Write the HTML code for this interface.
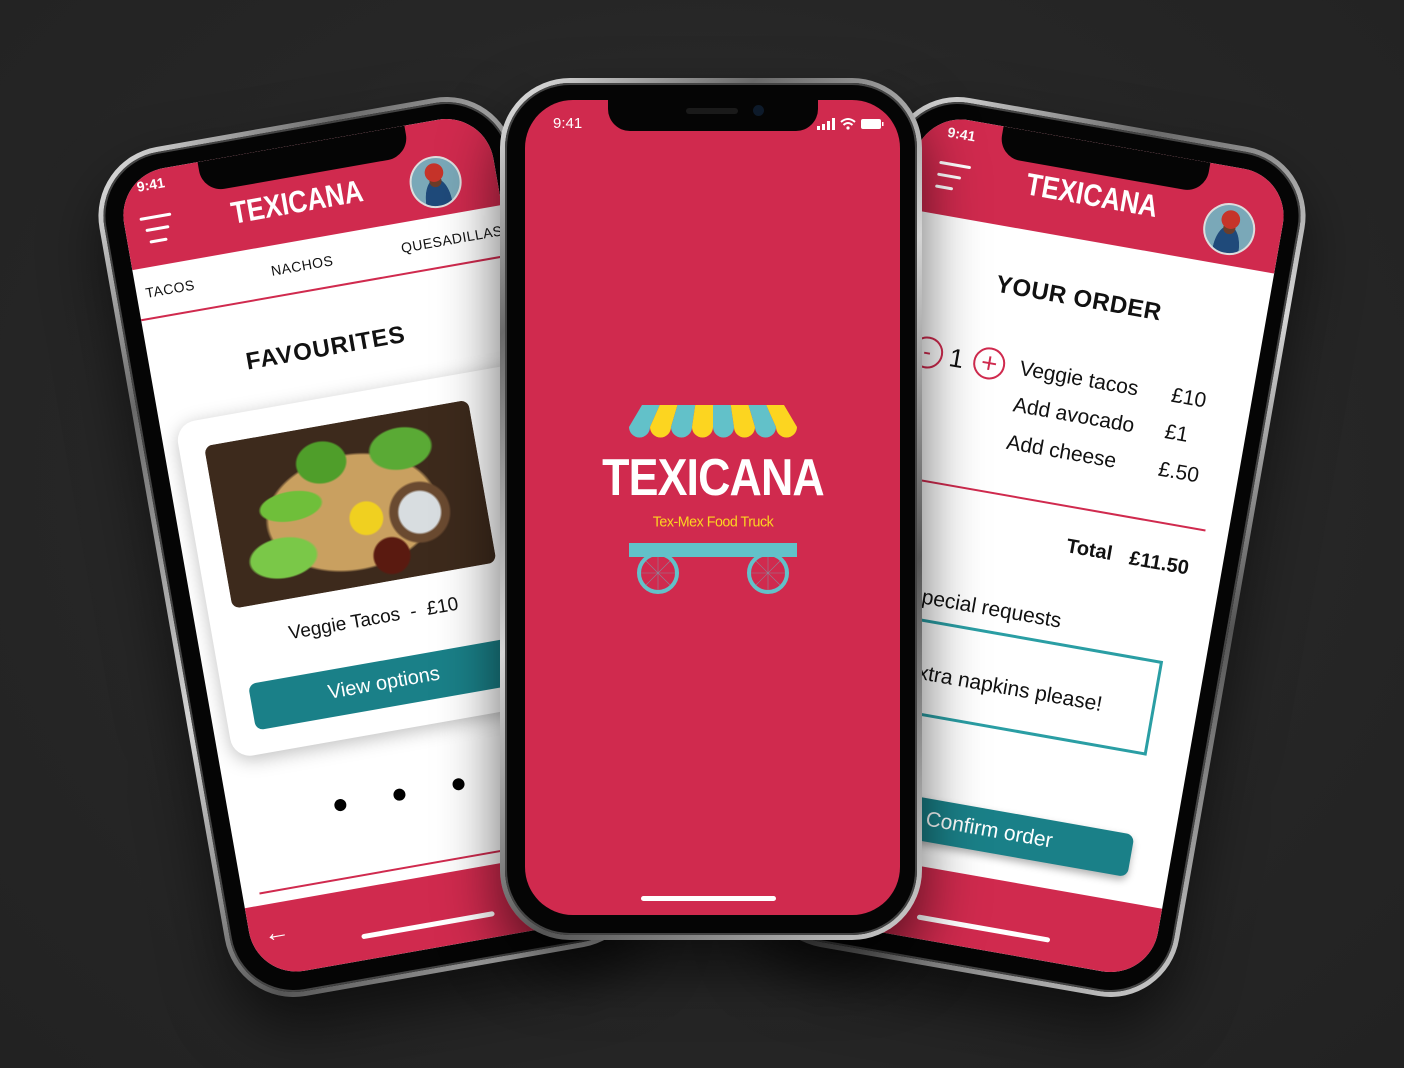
<!DOCTYPE html>
<html><head><meta charset="utf-8"><style>
*{margin:0;padding:0;box-sizing:border-box}
body{width:1404px;height:1068px;overflow:hidden;background:radial-gradient(ellipse at 50% 45%,#333 0%,#262626 60%,#222 100%);font-family:"Liberation Sans",sans-serif;position:relative}
.phone{position:absolute;width:422px;height:862px;border-radius:70px;background:linear-gradient(135deg,#e8e8e8,#6a6a6a 20%,#d5d5d5 45%,#555 70%,#cfcfcf);box-shadow:0 30px 60px rgba(0,0,0,.6)}
.bez{position:absolute;left:5px;top:5px;right:5px;bottom:5px;border-radius:65px;background:#050505;box-shadow:inset 0 0 0 2px #444}
.scr{position:absolute;left:25px;top:22px;width:375px;height:815px;border-radius:48px;overflow:hidden;background:#fff}
.notch{position:absolute;left:83px;top:0;width:210px;height:31px;background:#050505;border-radius:0 0 22px 22px;z-index:5}
.red{background:#d02a4e}
.a{position:absolute}
.c{position:absolute;transform:translate(-50%,-50%);white-space:nowrap}
.t{color:#fff;font-weight:700;font-size:31px;letter-spacing:0;transform:translate(-50%,-50%) scaleX(.84)}
.time{color:#fff;font-size:14px;font-weight:700}
.ham i{position:absolute;height:3px;background:#fff;border-radius:2px;left:0}
.av{position:absolute;width:52px;height:52px;border-radius:50%;border:2px solid #ddd;background:radial-gradient(circle at 50% 30%,#c6342a 0 22%,transparent 23%),radial-gradient(circle at 50% 48%,#6b3d2a 0 17%,transparent 18%),radial-gradient(ellipse at 50% 95%,#1f4a7a 0 38%,transparent 39%),#7aa8b8}
.tab{font-size:14px;color:#111;letter-spacing:.5px}
.teal{background:#1a8088}
.home{position:absolute;height:5px;width:135px;background:#fff;border-radius:3px}
.r{font-size:21px;color:#111}
</style></head><body>

<!-- LEFT PHONE -->
<div class="phone" style="left:159px;top:116px;transform:rotate(-10deg)">
<div class="bez"></div>
<div class="scr">
 <div class="notch"></div>
 <div class="a red" style="left:0;top:0;width:375px;height:95px"></div>
 <div class="c time" style="left:33px;top:14px">9:41</div>
 <div class="a ham" style="left:16px;top:45px;width:34px;height:26px"><i style="top:0;width:32px"></i><i style="top:12px;width:24px;left:4px"></i><i style="top:24px;width:18px;left:6px"></i></div>
 <div class="c t" style="left:174px;top:57px">TEXICANA</div>
 <div class="av" style="left:288px;top:35px"></div>
 <div class="c tab" style="left:34px;top:120px">TACOS</div>
 <div class="c tab" style="left:168px;top:120px">NACHOS</div>
 <div class="c tab" style="left:320px;top:120px">QUESADILLAS</div>
 <div class="a" style="left:0;top:145px;width:375px;height:2px;background:#d02a4e"></div>
 <div class="c" style="left:177px;top:206px;font-size:24px;font-weight:900;letter-spacing:1px;color:#111">FAVOURITES</div>
 <div class="a" style="left:15px;top:254px;width:400px;height:340px;background:#fff;border-radius:20px;box-shadow:0 4px 18px rgba(0,0,0,.25)"></div>
 <div class="a" style="left:40px;top:281px;width:268px;height:165px;border-radius:8px;background:radial-gradient(circle at 55% 60%,#f0d020 0 9%,transparent 10%),radial-gradient(circle at 75% 62%,#d8dde0 0 9%,#6a4a30 10% 13%,transparent 14%),radial-gradient(circle at 62% 85%,#5a1a10 0 8%,transparent 9%),radial-gradient(ellipse at 28% 45%,#6fbf3a 0 11%,transparent 12%),radial-gradient(ellipse at 42% 22%,#4f9e2a 0 11%,transparent 12%),radial-gradient(ellipse at 22% 75%,#7ac848 0 11%,transparent 12%),radial-gradient(ellipse at 72% 22%,#5aaa35 0 11%,transparent 12%),radial-gradient(ellipse at 50% 55%,#c9a060 0 44%,#3d2a1c 46%),#3d2a1c"></div>
 <div class="c" style="left:177px;top:481px;font-size:19px;color:#111">Veggie Tacos &nbsp;- &nbsp;£10</div>
 <div class="a teal" style="left:42px;top:523px;width:380px;height:47px;border-radius:8px"></div>
 <div class="c" style="left:176px;top:546px;font-size:20px;color:#fff">View options</div>
 <div class="a" style="left:106px;top:652px;width:12px;height:12px;border-radius:50%;background:#000"></div>
 <div class="a" style="left:166px;top:652px;width:12px;height:12px;border-radius:50%;background:#000"></div>
 <div class="a" style="left:226px;top:652px;width:12px;height:12px;border-radius:50%;background:#000"></div>
 <div class="a" style="left:17px;top:730px;width:360px;height:2px;background:#d02a4e"></div>
 <div class="a red" style="left:0;top:743px;width:375px;height:72px"></div>
 <div class="c" style="left:27px;top:772px;color:#fff;font-size:26px;font-weight:700">←</div>
 <div class="home" style="left:110px;top:789px"></div>
</div>
</div>

<!-- RIGHT PHONE -->
<div class="phone" style="left:823px;top:116px;transform:rotate(10deg)">
<div class="bez"></div>
<div class="scr">
 <div class="notch"></div>
 <div class="a red" style="left:0;top:0;width:375px;height:98px"></div>
 <div class="c time" style="left:43px;top:15px">9:41</div>
 <div class="a ham" style="left:26px;top:45px;width:34px;height:26px"><i style="top:0;width:32px"></i><i style="top:12px;width:24px"></i><i style="top:24px;width:18px"></i></div>
 <div class="c t" style="left:182px;top:53px">TEXICANA</div>
 <div class="av" style="left:297px;top:36px"></div>
 <div class="c" style="left:187px;top:157px;font-size:24px;font-weight:900;letter-spacing:.5px;color:#111">YOUR ORDER</div>
 <div class="c" style="left:47px;top:236px;width:32px;height:32px;border:2px solid #d02a4e;border-radius:50%;color:#d02a4e;font-size:24px;line-height:27px;text-align:center">-</div>
 <div class="c" style="left:77px;top:237px;font-size:26px;color:#111">1</div>
 <div class="c" style="left:110px;top:236px;width:32px;height:32px;border:2px solid #d02a4e;border-radius:50%;color:#d02a4e;font-size:28px;line-height:27px;text-align:center">+</div>
 <div class="a r" style="left:141px;top:224px">Veggie tacos</div>
 <div class="a r" style="left:295px;top:224px">£10</div>
 <div class="a r" style="left:141px;top:261px">Add avocado</div>
 <div class="a r" style="left:295px;top:261px">£1</div>
 <div class="a r" style="left:141px;top:299px">Add cheese</div>
 <div class="a r" style="left:295px;top:299px">£.50</div>
 <div class="a" style="left:0;top:362px;width:352px;height:2px;background:#d02a4e"></div>
 <div class="c" style="left:241px;top:403px;font-size:20px;font-weight:700;color:#111">Total</div>
 <div class="c" style="left:312px;top:404px;font-size:20px;font-weight:700;color:#111">£11.50</div>
 <div class="c" style="left:148px;top:478px;font-size:21px;color:#111">Special requests</div>
 <div class="a" style="left:35px;top:499px;width:298px;height:96px;border:3px solid #2a9ea4"></div>
 <div class="c" style="left:180px;top:553px;font-size:21px;color:#111">Extra napkins please!</div>
 <div class="a teal" style="left:35px;top:675px;width:300px;height:43px;border-radius:8px;box-shadow:0 4px 8px rgba(0,0,0,.3)"></div>
 <div class="c" style="left:191px;top:696px;font-size:21px;color:#fff">Confirm order</div>
 <div class="a red" style="left:0;top:743px;width:375px;height:72px"></div>
 <div class="home" style="left:135px;top:791px"></div>
</div>
</div>

<!-- CENTER PHONE -->
<div class="phone" style="left:500px;top:78px">
<div class="bez"></div>
<div class="scr red">
 <div class="notch"><div class="a" style="left:78px;top:8px;width:52px;height:6px;border-radius:3px;background:#1a1a1a"></div><div class="a" style="left:145px;top:5px;width:11px;height:11px;border-radius:50%;background:#0d1a2a"></div></div>
 <div class="a time" style="left:28px;top:15px;font-weight:400;font-size:15px">9:41</div>
 <svg class="a" style="left:292px;top:17px" width="70" height="14" viewBox="0 0 70 14">
  <rect x="0" y="9" width="3" height="4" fill="#fff"/><rect x="5" y="7" width="3" height="6" fill="#fff"/><rect x="10" y="4" width="3" height="9" fill="#fff"/><rect x="15" y="1" width="3" height="12" fill="#fff"/>
  <path d="M24 5 Q31 -1 38 5 M26.5 8 Q31 4 35.5 8" stroke="#fff" stroke-width="2" fill="none"/><circle cx="31" cy="11" r="1.6" fill="#fff"/>
  <rect x="44" y="2" width="20" height="10" rx="2" fill="#fff"/><rect x="65" y="5" width="1.5" height="4" fill="#fff"/>
 </svg>
 <div class="home" style="left:116px;top:796px"></div>
</div>
</div>

<!-- LOGO -->
<svg class="a" style="left:629px;top:405px" width="170" height="36" viewBox="0 0 170 36">
 <path d="M13 0 L30.75 0 L21 22 A10.5 10.5 0 0 1 0 22 Z" fill="#62c1c9"/>
 <path d="M30.75 0 L48.5 0 L42 22 A10.5 10.5 0 0 1 21 22 Z" fill="#fcd520"/>
 <path d="M48.5 0 L66.25 0 L63 22 A10.5 10.5 0 0 1 42 22 Z" fill="#62c1c9"/>
 <path d="M66.25 0 L84 0 L84 22 A10.5 10.5 0 0 1 63 22 Z" fill="#fcd520"/>
 <path d="M84 0 L101.75 0 L105 22 A10.5 10.5 0 0 1 84 22 Z" fill="#62c1c9"/>
 <path d="M101.75 0 L119.5 0 L126 22 A10.5 10.5 0 0 1 105 22 Z" fill="#fcd520"/>
 <path d="M119.5 0 L137.25 0 L147 22 A10.5 10.5 0 0 1 126 22 Z" fill="#62c1c9"/>
 <path d="M137.25 0 L155 0 L168 22 A10.5 10.5 0 0 1 147 22 Z" fill="#fcd520"/>
</svg>
<div class="c" style="left:713px;top:478px;font-size:52px;font-weight:700;color:#fff;letter-spacing:-1px;transform:translate(-50%,-50%) scaleX(.86)">TEXICANA</div>
<div class="c" style="left:713px;top:522px;font-size:15px;color:#fcd520;letter-spacing:-.5px;transform:translate(-50%,-50%) scaleX(.95)">Tex-Mex Food Truck</div>
<div class="a" style="left:629px;top:543px;width:168px;height:14px;background:#62c1c9"></div>
<svg class="a" style="left:636px;top:551px" width="156" height="44" viewBox="0 0 156 44">
 <g fill="none" stroke="#62c1c9" stroke-width="4"><circle cx="22" cy="22" r="19"/><circle cx="132" cy="22" r="19"/></g>
 <g stroke="#62c1c9" stroke-width=".6" opacity=".6"><path d="M5 22H39M22 5V39M10 10L34 34M34 10L10 34"/><path d="M115 22H149M132 5V39M120 10L144 34M144 10L120 34"/></g>
</svg>
</body></html>
